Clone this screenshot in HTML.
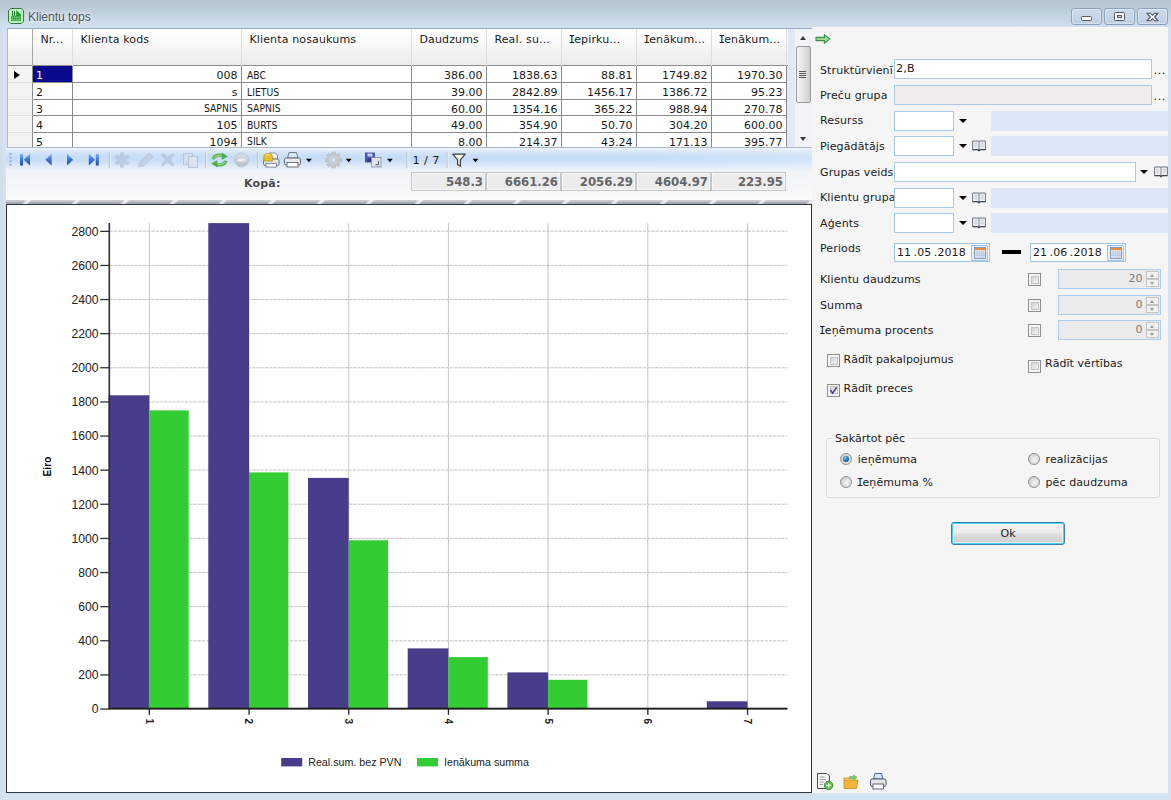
<!DOCTYPE html>
<html lang="lv"><head><meta charset="utf-8"><title>Klientu tops</title>
<style>
*{box-sizing:border-box;margin:0;padding:0}
html,body{width:1171px;height:800px;overflow:hidden}
body{position:relative;font-family:"DejaVu Sans","Liberation Sans",sans-serif;font-size:11px;color:#1a1a1a;
 background:linear-gradient(180deg,#b4c4d1 0px,#becfdc 12px,#d0e0f0 27px,#d2e2f1 200px,#d4e3f1 800px)}
.abs{position:absolute}
.t{position:absolute;white-space:nowrap;line-height:14px;height:14px}
.lbl{position:absolute;white-space:nowrap;line-height:14px;height:14px;left:820px;letter-spacing:0.12px;margin-top:1px}
.inp{position:absolute;background:#fff;border:1px solid #abc8e6;height:20px}
.blue{position:absolute;background:#dce7f8;height:19.5px;margin-top:.4px;left:990.5px;width:177.5px}
.cb{position:absolute;width:13px;height:13px;border:1px solid #8e8f8f;background:#f4f4f4}
.cb i{position:absolute;left:1.5px;top:1.5px;width:8px;height:8px;background:linear-gradient(135deg,#d2d2d2,#f5f5f5);border:1px solid #c3c3c3}
.rd{position:absolute;width:12px;height:12px;border-radius:50%;border:1px solid #8e8f8f;background:radial-gradient(circle at 58% 58%,#f4f4f4 0,#d9d9d9 55%,#bdbdbd 100%)}
.arr{position:absolute;width:0;height:0;border-left:4px solid transparent;border-right:4px solid transparent;border-top:4.8px solid #000;margin-left:-.2px}
.cell{position:absolute;height:17px;line-height:17px;white-space:nowrap;border-right:1px solid #8a8a8a;border-bottom:1px solid #8a8a8a;background:#fff;overflow:hidden}
.num{text-align:right;padding-right:3.5px}
.hd{position:absolute;top:1px;height:37px;white-space:nowrap;padding:4px 0 0 7.4px;line-height:14px;letter-spacing:0.15px;overflow:hidden;border-right:1px solid #dedede}
.sum{position:absolute;top:172px;height:19px;border:1px solid #c6c6c6;background:#ececec;text-align:right;padding-right:2px;line-height:18.6px;font-weight:bold;color:#66666a;font-size:11.7px;box-shadow:inset 0 0 0 1px #f7f7f7}
.vi{font-family:'DejaVu Sans Mono','Liberation Mono',monospace;margin:0 -1.1px 0 -0.9px}
</style></head>
<body>
<!-- title bar -->
<svg class="abs" style="left:7px;top:7px" width="18" height="18" viewBox="0 0 18 18">
<path d="M3.7 1.5 H14.3 L16.5 3.7 V14.3 L14.3 16.5 H3.7 L1.5 14.3 V3.7 Z" fill="#c6f4c4" stroke="#2e7d3c" stroke-width="1" stroke-linejoin="round"/>
<path d="M5 4 H6 V8.8 H5 Z M7 4 H8 V8.8 H7 Z" fill="#1c6e2c"/>
<path d="M9.2 2.9 L13.9 7.6 V9 H9.2 Z" fill="#14a324"/>
<rect x="4" y="8.7" width="9.9" height="5.1" fill="#23a032"/>
<path d="M4.8 10.1 H13.2 M4.8 12.2 H13.2" stroke="#b9f0b4" stroke-width="0.9" stroke-dasharray="1.3 0.9"/>
</svg>
<div class="t" style="left:28px;top:10px;font-family:'Liberation Sans',sans-serif;font-size:12px;color:#46525d;text-shadow:0 0 4px #fff,0 0 6px #fff">Klientu tops</div>
<div class="abs" style="left:0;top:28px;width:3px;height:772px;background:#cfe0ea"></div><div class="abs" style="left:3px;top:28px;width:3.5px;height:766px;background:#dadff4"></div>
<div class="abs" style="left:1168px;top:27px;width:3px;height:773px;background:#d3e2ee"></div>
<div class="abs" style="left:1071px;top:8px;width:31px;height:17px;border:1px solid #8da1ba;border-radius:3px;background:linear-gradient(180deg,#ccdaea 0,#c6d6e8 50%,#bfd0e4 100%);box-shadow:inset 0 0 0 1px rgba(255,255,255,.35)"><div class="abs" style="left:9px;top:6.7px;width:11px;height:5px;border:1px solid #4f5964;background:#fafbfd;border-radius:1.5px"></div></div>
<div class="abs" style="left:1104px;top:8px;width:30.5px;height:17px;border:1px solid #8da1ba;border-radius:3px;background:linear-gradient(180deg,#ccdaea 0,#c6d6e8 50%,#bfd0e4 100%);box-shadow:inset 0 0 0 1px rgba(255,255,255,.35)"><div class="abs" style="left:9px;top:2.7px;width:11px;height:9px;border:1px solid #4f5964;background:#fafbfd;border-radius:1.5px"><div class="abs" style="left:2px;top:2px;width:5px;height:3px;border:1px solid #4f5964;background:#c4d2e2"></div></div></div>
<div class="abs" style="left:1136.5px;top:8px;width:31px;height:17px;border:1px solid #8da1ba;border-radius:3px;background:linear-gradient(180deg,#ccdaea 0,#c6d6e8 50%,#bfd0e4 100%);box-shadow:inset 0 0 0 1px rgba(255,255,255,.35)"><svg class="abs" style="left:8px;top:3px" width="13" height="10" viewBox="0 0 13 10"><path d="M0.8 1.2 L4.4 1.2 L6.5 3.3 L8.6 1.2 L12.2 1.2 L8.6 5 L12.2 8.8 L8.6 8.8 L6.5 6.7 L4.4 8.8 L0.8 8.8 L4.4 5 Z" fill="#fafbfd" stroke="#4f5964" stroke-width="1.1" stroke-linejoin="round"/></svg></div>
<!-- data grid -->
<div class="abs" style="left:6px;top:28px;width:806px;height:120px;background:#dfeaf6;overflow:hidden">
<div class="abs" style="left:1px;top:0;width:805px;height:1px;background:#9dabc0"></div><div class="abs" style="left:0;top:0;width:1px;height:120px;background:#d6dff4"></div><div class="abs" style="left:1px;top:0;width:1px;height:120px;background:#a9b9cf"></div>
<div class="abs" style="left:2px;top:1px;width:780px;height:37px;background:linear-gradient(180deg,#fefefe 0,#fafafa 40%,#f2f2f2 62%,#ededed 100%);border-bottom:1px solid #8c8c8c"></div>
<div class="hd" style="left:1px;width:26px;border-right-color:#a8a8a8"></div>
<div class="hd" style="left:27px;width:40px">Nr...</div>
<div class="hd" style="left:67px;width:169px">Klienta kods</div>
<div class="hd" style="left:236px;width:170px">Klienta nosaukums</div>
<div class="hd" style="left:406px;width:75px">Daudzums</div>
<div class="hd" style="left:481px;width:75px">Real. su...</div>
<div class="hd" style="left:556px;width:75px"><span class="vi">I</span>epirku...</div>
<div class="hd" style="left:631px;width:75px"><span class="vi">I</span>enākum...</div>
<div class="hd" style="left:706px;width:75px"><span class="vi">I</span>enākum...</div>
<div class="cell" style="left:2px;top:38px;height:17px;line-height:20.4px;width:25px;background:#f3f3f3;border-bottom:1px solid #e0e0e0"></div>
<div class="cell" style="left:27px;top:38px;height:17px;line-height:20.4px;width:40px;padding-left:3px;background:#0a0a8c;color:#fff;">1</div>
<div class="cell num" style="left:67px;top:38px;height:17px;line-height:20.4px;width:169px;">008</div>
<div class="cell" style="left:236px;top:38px;height:17px;line-height:18.6px;width:170px;padding-left:5px;font-family:'DejaVu Sans Condensed','Liberation Sans',sans-serif;font-size:10.3px">ABC</div>
<div class="cell num" style="left:406px;top:38px;height:17px;line-height:20.4px;width:75px">386.00</div>
<div class="cell num" style="left:481px;top:38px;height:17px;line-height:20.4px;width:75px">1838.63</div>
<div class="cell num" style="left:556px;top:38px;height:17px;line-height:20.4px;width:75px">88.81</div>
<div class="cell num" style="left:631px;top:38px;height:17px;line-height:20.4px;width:75px">1749.82</div>
<div class="cell num" style="left:706px;top:38px;height:17px;line-height:20.4px;width:75px">1970.30</div>
<div class="cell" style="left:2px;top:55px;height:17px;line-height:20.4px;width:25px;background:#f3f3f3;border-bottom:1px solid #e0e0e0"></div>
<div class="cell" style="left:27px;top:55px;height:17px;line-height:20.4px;width:40px;padding-left:3px;">2</div>
<div class="cell num" style="left:67px;top:55px;height:17px;line-height:20.4px;width:169px;">s</div>
<div class="cell" style="left:236px;top:55px;height:17px;line-height:18.6px;width:170px;padding-left:5px;font-family:'DejaVu Sans Condensed','Liberation Sans',sans-serif;font-size:10.3px">LIETUS</div>
<div class="cell num" style="left:406px;top:55px;height:17px;line-height:20.4px;width:75px">39.00</div>
<div class="cell num" style="left:481px;top:55px;height:17px;line-height:20.4px;width:75px">2842.89</div>
<div class="cell num" style="left:556px;top:55px;height:17px;line-height:20.4px;width:75px">1456.17</div>
<div class="cell num" style="left:631px;top:55px;height:17px;line-height:20.4px;width:75px">1386.72</div>
<div class="cell num" style="left:706px;top:55px;height:17px;line-height:20.4px;width:75px">95.23</div>
<div class="cell" style="left:2px;top:72px;height:16px;line-height:19.4px;width:25px;background:#f3f3f3;border-bottom:1px solid #e0e0e0"></div>
<div class="cell" style="left:27px;top:72px;height:16px;line-height:19.4px;width:40px;padding-left:3px;">3</div>
<div class="cell num" style="left:67px;top:72px;height:16px;line-height:17.6px;width:169px;font-family:'DejaVu Sans Condensed','Liberation Sans',sans-serif;font-size:10.3px;">SAPNIS</div>
<div class="cell" style="left:236px;top:72px;height:16px;line-height:17.6px;width:170px;padding-left:5px;font-family:'DejaVu Sans Condensed','Liberation Sans',sans-serif;font-size:10.3px">SAPNIS</div>
<div class="cell num" style="left:406px;top:72px;height:16px;line-height:19.4px;width:75px">60.00</div>
<div class="cell num" style="left:481px;top:72px;height:16px;line-height:19.4px;width:75px">1354.16</div>
<div class="cell num" style="left:556px;top:72px;height:16px;line-height:19.4px;width:75px">365.22</div>
<div class="cell num" style="left:631px;top:72px;height:16px;line-height:19.4px;width:75px">988.94</div>
<div class="cell num" style="left:706px;top:72px;height:16px;line-height:19.4px;width:75px">270.78</div>
<div class="cell" style="left:2px;top:88px;height:17px;line-height:20.4px;width:25px;background:#f3f3f3;border-bottom:1px solid #e0e0e0"></div>
<div class="cell" style="left:27px;top:88px;height:17px;line-height:20.4px;width:40px;padding-left:3px;">4</div>
<div class="cell num" style="left:67px;top:88px;height:17px;line-height:20.4px;width:169px;">105</div>
<div class="cell" style="left:236px;top:88px;height:17px;line-height:18.6px;width:170px;padding-left:5px;font-family:'DejaVu Sans Condensed','Liberation Sans',sans-serif;font-size:10.3px">BURTS</div>
<div class="cell num" style="left:406px;top:88px;height:17px;line-height:20.4px;width:75px">49.00</div>
<div class="cell num" style="left:481px;top:88px;height:17px;line-height:20.4px;width:75px">354.90</div>
<div class="cell num" style="left:556px;top:88px;height:17px;line-height:20.4px;width:75px">50.70</div>
<div class="cell num" style="left:631px;top:88px;height:17px;line-height:20.4px;width:75px">304.20</div>
<div class="cell num" style="left:706px;top:88px;height:17px;line-height:20.4px;width:75px">600.00</div>
<div class="cell" style="left:2px;top:105px;height:17px;line-height:20.4px;width:25px;background:#f3f3f3;border-bottom:1px solid #e0e0e0"></div>
<div class="cell" style="left:27px;top:105px;height:17px;line-height:20.4px;width:40px;padding-left:3px;">5</div>
<div class="cell num" style="left:67px;top:105px;height:17px;line-height:20.4px;width:169px;">1094</div>
<div class="cell" style="left:236px;top:105px;height:17px;line-height:16.6px;width:170px;padding-left:5px;font-family:'DejaVu Sans Condensed','Liberation Sans',sans-serif;font-size:10.3px">SILK</div>
<div class="cell num" style="left:406px;top:105px;height:17px;line-height:20.4px;width:75px">8.00</div>
<div class="cell num" style="left:481px;top:105px;height:17px;line-height:20.4px;width:75px">214.37</div>
<div class="cell num" style="left:556px;top:105px;height:17px;line-height:20.4px;width:75px">43.24</div>
<div class="cell num" style="left:631px;top:105px;height:17px;line-height:20.4px;width:75px">171.13</div>
<div class="cell num" style="left:706px;top:105px;height:17px;line-height:20.4px;width:75px">395.77</div>
<div class="abs" style="left:8px;top:42.5px;width:0;height:0;border-top:4.5px solid transparent;border-bottom:4.5px solid transparent;border-left:6px solid #000"></div>
<div class="abs" style="left:789px;top:1px;width:17px;height:119px;background:#f1f3f6"></div>
<div class="abs" style="left:789.5px;top:18px;width:15.5px;height:57px;border:1px solid #9a9a9a;border-radius:2px;background:linear-gradient(90deg,#f4f4f4 0,#e3e3e5 50%,#cfcfd3 100%)"></div>
<div class="abs" style="left:793px;top:43px;width:7px;height:1px;background:#5a5a5a;box-shadow:0 2px 0 #5a5a5a,0 4px 0 #5a5a5a,0 6px 0 #5a5a5a"></div>
<div class="abs" style="left:794px;top:7.5px;width:0;height:0;border-left:3.4px solid transparent;border-right:3.4px solid transparent;border-bottom:4px solid #3a3a3a"></div>
<div class="abs" style="left:794px;top:109px;width:0;height:0;border-left:3.4px solid transparent;border-right:3.4px solid transparent;border-top:4px solid #3a3a3a"></div>
</div>
<!-- toolbar / totals -->
<div class="abs" style="left:6px;top:148px;width:806px;height:24px;background:linear-gradient(180deg,#f0f5fc 0,#dae8f9 14%,#c7ddf8 34%,#c9dff8 54%,#dde9f9 74%,#ecf2fa 90%,#f2f5f9 100%)"></div>
<div class="abs" style="left:406px;top:148px;width:406px;height:24px;background:linear-gradient(90deg,rgba(238,243,250,0) 0,rgba(238,243,250,.0) 60%,rgba(240,244,250,.25) 100%)"></div>
<div class="abs" style="left:7px;top:147px;width:805px;height:1px;background:#a9b7ca"></div>
<div class="abs" style="left:6px;top:172px;width:806px;height:28px;background:linear-gradient(180deg,#f0f3f8 0,#f5f6f8 50%,#fbfbfa 100%)"></div>
<div class="abs" style="left:6px;top:200px;width:806px;height:4.5px;background:repeating-linear-gradient(135deg,rgba(255,255,255,0) 0,rgba(255,255,255,0) 13.6px,rgba(255,255,255,.7) 15.4px,rgba(255,255,255,.7) 17px,rgba(255,255,255,0) 18.8px,rgba(255,255,255,0) 34.65px),linear-gradient(180deg,#d3d6d9 0,#b4b9be 40%,#8e959b 100%)"></div>
<svg class="abs" style="left:6px;top:148px" width="806" height="24" viewBox="0 0 806 24">
<defs><linearGradient id="bl" x1="0" y1="0" x2="0" y2="1"><stop offset="0" stop-color="#7db0f2"/><stop offset="0.5" stop-color="#3a72dc"/><stop offset="1" stop-color="#2449a8"/></linearGradient><linearGradient id="gy" x1="0" y1="0" x2="0" y2="1"><stop offset="0" stop-color="#dfe2e8"/><stop offset="1" stop-color="#aeb3bc"/></linearGradient></defs>
<rect x="3.5" y="5.0" width="2" height="2" fill="#9fb0c6"/>
<rect x="3.5" y="8.6" width="2" height="2" fill="#9fb0c6"/>
<rect x="3.5" y="12.2" width="2" height="2" fill="#9fb0c6"/>
<rect x="3.5" y="15.8" width="2" height="2" fill="#9fb0c6"/>
<rect x="14" y="6" width="3" height="11.5" fill="url(#bl)"/><path d="M24 5.8 L24 17.6 L17.8 11.7 Z" fill="url(#bl)"/>
<path d="M45.6 5.8 L45.6 17.6 L39.4 11.7 Z" fill="url(#bl)"/>
<path d="M61 5.8 L61 17.6 L67.2 11.7 Z" fill="url(#bl)"/>
<path d="M82.8 5.8 L82.8 17.6 L89 11.7 Z" fill="url(#bl)"/><rect x="89.8" y="6" width="3" height="11.5" fill="url(#bl)"/>
<rect x="102.8" y="4" width="1.2" height="16" fill="#bcc3ce" opacity=".85"/><rect x="104.0" y="4" width="1" height="16" fill="#f4f7fb" opacity=".7"/>
<rect x="199" y="4" width="1.2" height="16" fill="#bcc3ce" opacity=".85"/><rect x="200.2" y="4" width="1" height="16" fill="#f4f7fb" opacity=".7"/>
<rect x="251" y="4" width="1.2" height="16" fill="#bcc3ce" opacity=".85"/><rect x="252.2" y="4" width="1" height="16" fill="#f4f7fb" opacity=".7"/>
<rect x="400.3" y="4" width="1.2" height="16" fill="#bcc3ce" opacity=".85"/><rect x="401.5" y="4" width="1" height="16" fill="#f4f7fb" opacity=".7"/>
<rect x="440.5" y="4" width="1.2" height="16" fill="#bcc3ce" opacity=".85"/><rect x="441.7" y="4" width="1" height="16" fill="#f4f7fb" opacity=".7"/>
<g stroke="#b4c4db" stroke-width="4.2" stroke-linecap="round" opacity=".75"><path d="M116 6 V18 M110.8 9 L121.2 15 M121.2 9 L110.8 15"/></g>
<path d="M132.5 18.8 L133.8 14.2 L143 5.2 L147 9 L137.6 18 Z" fill="#c1cfe2" stroke="#b4c3d9" stroke-width="1" opacity=".85"/>
<g stroke="#b7c5da" stroke-width="3.4" stroke-linecap="round" opacity=".8"><path d="M157 7 L166.5 16.5 M166.5 7 L157 16.5"/></g>
<rect x="177.5" y="5.5" width="9" height="11" fill="#d3dfee" stroke="#b7c5da"/><rect x="182.5" y="8.5" width="9" height="11" fill="#dbe5f2" stroke="#b7c5da"/>
<g fill="none" stroke="#4fae48" stroke-width="3.2"><path d="M207.3 11.2 C208 7 214 5.8 217.6 8.6"/><path d="M219.7 12.8 C219 17 213 18.2 209.4 15.4"/></g><g fill="none" stroke="#9fdc93" stroke-width="1.1"><path d="M207.6 10.6 C208.6 7.4 213.8 6.4 216.8 8.4"/><path d="M219.4 13.4 C218.4 16.6 213.2 17.6 210.2 15.6"/></g><path d="M215.6 4.6 L222 8.6 L215.8 11.8 Z" fill="#4fae48"/><path d="M211.4 19.4 L205 15.4 L211.2 12.2 Z" fill="#4fae48"/>
<circle cx="235.5" cy="12" r="7" fill="url(#gy)" stroke="#bcc2cc" stroke-width="1" opacity=".8"/><rect x="231.5" y="10.8" width="8" height="2.6" rx="1" fill="#eef0f3"/>
<path d="M263.5 5 L269.5 5 L271.5 7.5 L271.5 11 L263.5 11 Z" fill="#f6f8fb" stroke="#7a88a0" stroke-width=".9"/><rect x="257.5" y="11" width="15.5" height="6.5" rx="1.8" fill="#e3e6ea" stroke="#68727f" stroke-width="1"/><rect x="260" y="15.3" width="10.5" height="3.8" fill="#fafafa" stroke="#68727f" stroke-width=".8"/><path d="M257.8 9 Q257.8 5.8 261 5.8 L265.2 5.8 L266.6 8.4 L266.6 13 L257.8 13 Z" fill="#e6c02c" stroke="#b8941e" stroke-width=".8"/><path d="M259 8 Q259.4 6.8 261 6.8 L264.4 6.8" fill="none" stroke="#f7e48a" stroke-width=".9"/>
<path d="M281.5 10 L283 4.5 L290.5 4.5 L292 10 Z" fill="#d9e8f8" stroke="#6a7a92" stroke-width="1"/><rect x="278.5" y="10" width="16" height="7" rx="1.8" fill="#e6e8ec" stroke="#5f6977" stroke-width="1"/><rect x="281" y="14.5" width="11" height="4.5" fill="#fbfbfb" stroke="#5f6977" stroke-width=".9"/>
<path d="M300 10.7 H305.8 L302.9 14.2 Z" fill="#000"/>
<g transform="translate(327.5,12)"><g fill="#c3c7ce" stroke="#b0b5bd" stroke-width=".5"><rect x="-1.8" y="-8" width="3.6" height="4" transform="rotate(0)"/><rect x="-1.8" y="-8" width="3.6" height="4" transform="rotate(45)"/><rect x="-1.8" y="-8" width="3.6" height="4" transform="rotate(90)"/><rect x="-1.8" y="-8" width="3.6" height="4" transform="rotate(135)"/><rect x="-1.8" y="-8" width="3.6" height="4" transform="rotate(180)"/><rect x="-1.8" y="-8" width="3.6" height="4" transform="rotate(225)"/><rect x="-1.8" y="-8" width="3.6" height="4" transform="rotate(270)"/><rect x="-1.8" y="-8" width="3.6" height="4" transform="rotate(315)"/></g><circle r="5.6" fill="#cbced4" stroke="#b0b5bd" stroke-width=".6"/><circle r="2.4" fill="#d9e6f6" stroke="#b0b5bd" stroke-width=".6"/></g>
<path d="M339.8 10.7 H345.6 L342.7 14.2 Z" fill="#000"/>
<rect x="359.5" y="5" width="9" height="9" fill="#4a55b8" stroke="#39439a" stroke-width=".8"/><rect x="361.5" y="5.5" width="5" height="3" fill="#c9cff0"/><rect x="361.5" y="10.5" width="5" height="3.5" fill="#2f378a"/><rect x="365.5" y="9.5" width="9.5" height="9.5" fill="#dfe3ea" stroke="#808aa0" stroke-width=".8"/><path d="M372.5 13 V16.8 H369.5" fill="none" stroke="#444e66" stroke-width="1"/>
<path d="M381 10.7 H386.8 L383.9 14.2 Z" fill="#000"/>
<path d="M446.8 6.2 H459.2 L454.4 11.8 V18.2 L451.6 16.6 V11.8 Z" fill="#fdfdfd" stroke="#3c3c3c" stroke-width="1.2" stroke-linejoin="round"/>
<path d="M466.6 10.7 H472.4 L469.5 14.2 Z" fill="#000"/>
</svg>
<div class="t" style="left:412.5px;top:154px;font-size:11.3px;letter-spacing:.4px">1 / 7</div>
<div class="t" style="left:244px;top:177px;font-weight:bold;color:#4a4a4a;letter-spacing:.2px">Kopā:</div>
<div class="sum" style="left:411px;width:75px">548.3</div>
<div class="sum" style="left:486px;width:75px">6661.26</div>
<div class="sum" style="left:561px;width:75px">2056.29</div>
<div class="sum" style="left:636px;width:75px">4604.97</div>
<div class="sum" style="left:711px;width:75px">223.95</div>
<!-- chart -->
<div class="abs" style="left:6px;top:204px;width:806px;height:589px;background:#fff;border:1px solid #2c3540"></div>
<svg class="abs" style="left:0;top:0" width="1171" height="800" viewBox="0 0 1171 800" font-family="'Liberation Sans',Arial,sans-serif">
<rect x="148.8" y="223.0" width="1" height="486.0" fill="#c6c6c6"/>
<rect x="248.5" y="223.0" width="1" height="486.0" fill="#c6c6c6"/>
<rect x="348.2" y="223.0" width="1" height="486.0" fill="#c6c6c6"/>
<rect x="447.9" y="223.0" width="1" height="486.0" fill="#c6c6c6"/>
<rect x="547.6" y="223.0" width="1" height="486.0" fill="#c6c6c6"/>
<rect x="647.3" y="223.0" width="1" height="486.0" fill="#c6c6c6"/>
<rect x="747.0" y="223.0" width="1" height="486.0" fill="#c6c6c6"/>
<line x1="109.5" y1="674.9" x2="787.5" y2="674.9" stroke="#c2c2c2" stroke-width="1" stroke-dasharray="3.2 1"/>
<line x1="109.5" y1="640.8" x2="787.5" y2="640.8" stroke="#c2c2c2" stroke-width="1" stroke-dasharray="3.2 1"/>
<line x1="109.5" y1="606.6" x2="787.5" y2="606.6" stroke="#c2c2c2" stroke-width="1" stroke-dasharray="3.2 1"/>
<line x1="109.5" y1="572.5" x2="787.5" y2="572.5" stroke="#c2c2c2" stroke-width="1" stroke-dasharray="3.2 1"/>
<line x1="109.5" y1="538.4" x2="787.5" y2="538.4" stroke="#c2c2c2" stroke-width="1" stroke-dasharray="3.2 1"/>
<line x1="109.5" y1="504.2" x2="787.5" y2="504.2" stroke="#c2c2c2" stroke-width="1" stroke-dasharray="3.2 1"/>
<line x1="109.5" y1="470.1" x2="787.5" y2="470.1" stroke="#c2c2c2" stroke-width="1" stroke-dasharray="3.2 1"/>
<line x1="109.5" y1="436.0" x2="787.5" y2="436.0" stroke="#c2c2c2" stroke-width="1" stroke-dasharray="3.2 1"/>
<line x1="109.5" y1="401.9" x2="787.5" y2="401.9" stroke="#c2c2c2" stroke-width="1" stroke-dasharray="3.2 1"/>
<line x1="109.5" y1="367.8" x2="787.5" y2="367.8" stroke="#c2c2c2" stroke-width="1" stroke-dasharray="3.2 1"/>
<line x1="109.5" y1="333.6" x2="787.5" y2="333.6" stroke="#c2c2c2" stroke-width="1" stroke-dasharray="3.2 1"/>
<line x1="109.5" y1="299.5" x2="787.5" y2="299.5" stroke="#c2c2c2" stroke-width="1" stroke-dasharray="3.2 1"/>
<line x1="109.5" y1="265.4" x2="787.5" y2="265.4" stroke="#c2c2c2" stroke-width="1" stroke-dasharray="3.2 1"/>
<line x1="109.5" y1="231.2" x2="787.5" y2="231.2" stroke="#c2c2c2" stroke-width="1" stroke-dasharray="3.2 1"/>
<rect x="108.6" y="395.3" width="40.7" height="313.7" fill="#483d8b"/>
<rect x="149.3" y="410.4" width="39.4" height="298.6" fill="#32cd32"/>
<rect x="208.3" y="223.1" width="40.7" height="485.9" fill="#483d8b"/>
<rect x="249.0" y="472.4" width="39.4" height="236.6" fill="#32cd32"/>
<rect x="308.0" y="477.9" width="40.7" height="231.1" fill="#483d8b"/>
<rect x="348.7" y="540.3" width="39.4" height="168.7" fill="#32cd32"/>
<rect x="407.7" y="648.4" width="40.7" height="60.6" fill="#483d8b"/>
<rect x="448.4" y="657.1" width="39.4" height="51.9" fill="#32cd32"/>
<rect x="507.4" y="672.4" width="40.7" height="36.6" fill="#483d8b"/>
<rect x="548.1" y="679.8" width="39.4" height="29.2" fill="#32cd32"/>
<rect x="607.1" y="708.1" width="40.7" height="0.9" fill="#483d8b"/>
<rect x="647.8" y="708.3" width="39.4" height="0.7" fill="#32cd32"/>
<rect x="706.8" y="701.3" width="40.7" height="7.7" fill="#483d8b"/>
<rect x="747.5" y="708.0" width="39.4" height="1.0" fill="#32cd32"/>
<rect x="108.5" y="223.0" width="1.6" height="486.0" fill="#2e2e2e"/>
<rect x="108.5" y="707.7" width="679.0" height="1.9" fill="#1c1c1c"/>
<rect x="100.2" y="708.4" width="9.3" height="1.3" fill="#333"/>
<text x="98.6" y="713.4" text-anchor="end" font-size="12.2" fill="#222">0</text>
<rect x="100.2" y="674.3" width="9.3" height="1.3" fill="#333"/>
<text x="98.6" y="679.3" text-anchor="end" font-size="12.2" fill="#222">200</text>
<rect x="100.2" y="640.1" width="9.3" height="1.3" fill="#333"/>
<text x="98.6" y="645.1" text-anchor="end" font-size="12.2" fill="#222">400</text>
<rect x="100.2" y="606.0" width="9.3" height="1.3" fill="#333"/>
<text x="98.6" y="611.0" text-anchor="end" font-size="12.2" fill="#222">600</text>
<rect x="100.2" y="571.9" width="9.3" height="1.3" fill="#333"/>
<text x="98.6" y="576.9" text-anchor="end" font-size="12.2" fill="#222">800</text>
<rect x="100.2" y="537.8" width="9.3" height="1.3" fill="#333"/>
<text x="98.6" y="542.8" text-anchor="end" font-size="12.2" fill="#222">1000</text>
<rect x="100.2" y="503.6" width="9.3" height="1.3" fill="#333"/>
<text x="98.6" y="508.6" text-anchor="end" font-size="12.2" fill="#222">1200</text>
<rect x="100.2" y="469.5" width="9.3" height="1.3" fill="#333"/>
<text x="98.6" y="474.5" text-anchor="end" font-size="12.2" fill="#222">1400</text>
<rect x="100.2" y="435.4" width="9.3" height="1.3" fill="#333"/>
<text x="98.6" y="440.4" text-anchor="end" font-size="12.2" fill="#222">1600</text>
<rect x="100.2" y="401.3" width="9.3" height="1.3" fill="#333"/>
<text x="98.6" y="406.3" text-anchor="end" font-size="12.2" fill="#222">1800</text>
<rect x="100.2" y="367.1" width="9.3" height="1.3" fill="#333"/>
<text x="98.6" y="372.1" text-anchor="end" font-size="12.2" fill="#222">2000</text>
<rect x="100.2" y="333.0" width="9.3" height="1.3" fill="#333"/>
<text x="98.6" y="338.0" text-anchor="end" font-size="12.2" fill="#222">2200</text>
<rect x="100.2" y="298.9" width="9.3" height="1.3" fill="#333"/>
<text x="98.6" y="303.9" text-anchor="end" font-size="12.2" fill="#222">2400</text>
<rect x="100.2" y="264.8" width="9.3" height="1.3" fill="#333"/>
<text x="98.6" y="269.8" text-anchor="end" font-size="12.2" fill="#222">2600</text>
<rect x="100.2" y="230.7" width="9.3" height="1.3" fill="#333"/>
<text x="98.6" y="235.7" text-anchor="end" font-size="12.2" fill="#222">2800</text>
<rect x="148.7" y="709.0" width="1.3" height="5.8" fill="#222"/>
<text transform="translate(145.7,718.4) rotate(90)" font-size="10" font-weight="bold" fill="#222">1</text>
<rect x="248.4" y="709.0" width="1.3" height="5.8" fill="#222"/>
<text transform="translate(245.4,718.4) rotate(90)" font-size="10" font-weight="bold" fill="#222">2</text>
<rect x="348.1" y="709.0" width="1.3" height="5.8" fill="#222"/>
<text transform="translate(345.1,718.4) rotate(90)" font-size="10" font-weight="bold" fill="#222">3</text>
<rect x="447.8" y="709.0" width="1.3" height="5.8" fill="#222"/>
<text transform="translate(444.8,718.4) rotate(90)" font-size="10" font-weight="bold" fill="#222">4</text>
<rect x="547.5" y="709.0" width="1.3" height="5.8" fill="#222"/>
<text transform="translate(544.5,718.4) rotate(90)" font-size="10" font-weight="bold" fill="#222">5</text>
<rect x="647.2" y="709.0" width="1.3" height="5.8" fill="#222"/>
<text transform="translate(644.2,718.4) rotate(90)" font-size="10" font-weight="bold" fill="#222">6</text>
<rect x="746.9" y="709.0" width="1.3" height="5.8" fill="#222"/>
<text transform="translate(743.9,718.4) rotate(90)" font-size="10" font-weight="bold" fill="#222">7</text>
<text transform="translate(51,476.5) rotate(-90)" font-size="10" font-weight="bold" fill="#000" letter-spacing="0.15">Eiro</text>
<rect x="281.2" y="758" width="21" height="8.4" fill="#483d8b"/>
<text x="308.2" y="765.6" font-size="10.7" fill="#222">Real.sum. bez PVN</text>
<rect x="417" y="758" width="21" height="8.4" fill="#32cd32"/>
<text x="444" y="765.6" font-size="10.7" fill="#222">Ienākuma summa</text>
</svg>
<!-- filter panel -->
<div class="abs" style="left:812px;top:27px;width:356px;height:766px;background:#f5f5f5"></div>
<div class="abs" style="left:812px;top:27px;width:356px;height:1px;background:#fafbfc"></div>
<svg class="abs" style="left:815px;top:34px" width="16" height="10" viewBox="0 0 16 10"><path d="M1 3.4 H9.4 V0.8 L15 5 L9.4 9.2 V6.6 H1 Z" fill="#9ad894" stroke="#3c8f45" stroke-width="1.1"/></svg>
<div class="lbl" style="top:63px">Struktūrvienī</div>
<div class="lbl" style="top:88px">Preču grupa</div>
<div class="lbl" style="top:113px">Resurss</div>
<div class="lbl" style="top:139px">Piegādātājs</div>
<div class="lbl" style="top:165px">Grupas veids</div>
<div class="lbl" style="top:190px">Klientu grupa</div>
<div class="lbl" style="top:216px">Aģents</div>
<div class="lbl" style="top:241px">Periods</div>
<div class="lbl" style="top:272px">Klientu daudzums</div>
<div class="lbl" style="top:298px">Summa</div>
<div class="lbl" style="top:323px"><span class="vi">I</span>eņēmuma procents</div>
<div class="inp" style="left:894px;top:59px;width:258px"></div><div class="t" style="left:896px;top:61.5px;letter-spacing:.3px">2,B</div>
<div class="t" style="left:1153.6px;top:64px;letter-spacing:.6px;font-size:11px">...</div>
<div class="inp" style="left:894px;top:85px;width:258px;background:#eeedea"></div>
<div class="t" style="left:1153.6px;top:90px;letter-spacing:.6px;font-size:11px">...</div>
<div class="inp" style="left:894px;top:111px;width:60px"></div><div class="arr" style="left:959px;top:119px"></div><div class="blue" style="top:111px"></div>
<div class="inp" style="left:894px;top:136px;width:60px"></div><div class="arr" style="left:959px;top:144px"></div><div class="blue" style="top:136px"></div>
<svg class="abs" style="left:972px;top:140px" width="14" height="12" viewBox="0 0 14 12"><path d="M0.6 1 H6.3 Q7 1 7 1.8 Q7 1 7.7 1 H13.4 V9.6 H8 L7 10.8 L6 9.6 H0.6 Z" fill="#f2f3f5" stroke="#5d6674" stroke-width=".9"/><path d="M7 1.8 V10" stroke="#5d6674" stroke-width=".8"/><path d="M2.2 3.2 H5.4 M2.2 5 H5.4 M2.2 6.8 H5.4 M8.6 3.2 H11.8 M8.6 5 H11.8 M8.6 6.8 H11.8" stroke="#b9bec8" stroke-width=".8"/><path d="M0.6 9.6 H6 L7 10.8 L8 9.6 H13.4" fill="none" stroke="#3f4856" stroke-width="1.3"/></svg>
<div class="inp" style="left:894px;top:188px;width:60px"></div><div class="arr" style="left:959px;top:196px"></div><div class="blue" style="top:188px"></div>
<svg class="abs" style="left:972px;top:192px" width="14" height="12" viewBox="0 0 14 12"><path d="M0.6 1 H6.3 Q7 1 7 1.8 Q7 1 7.7 1 H13.4 V9.6 H8 L7 10.8 L6 9.6 H0.6 Z" fill="#f2f3f5" stroke="#5d6674" stroke-width=".9"/><path d="M7 1.8 V10" stroke="#5d6674" stroke-width=".8"/><path d="M2.2 3.2 H5.4 M2.2 5 H5.4 M2.2 6.8 H5.4 M8.6 3.2 H11.8 M8.6 5 H11.8 M8.6 6.8 H11.8" stroke="#b9bec8" stroke-width=".8"/><path d="M0.6 9.6 H6 L7 10.8 L8 9.6 H13.4" fill="none" stroke="#3f4856" stroke-width="1.3"/></svg>
<div class="inp" style="left:894px;top:213px;width:60px"></div><div class="arr" style="left:959px;top:221px"></div><div class="blue" style="top:213px"></div>
<svg class="abs" style="left:972px;top:217px" width="14" height="12" viewBox="0 0 14 12"><path d="M0.6 1 H6.3 Q7 1 7 1.8 Q7 1 7.7 1 H13.4 V9.6 H8 L7 10.8 L6 9.6 H0.6 Z" fill="#f2f3f5" stroke="#5d6674" stroke-width=".9"/><path d="M7 1.8 V10" stroke="#5d6674" stroke-width=".8"/><path d="M2.2 3.2 H5.4 M2.2 5 H5.4 M2.2 6.8 H5.4 M8.6 3.2 H11.8 M8.6 5 H11.8 M8.6 6.8 H11.8" stroke="#b9bec8" stroke-width=".8"/><path d="M0.6 9.6 H6 L7 10.8 L8 9.6 H13.4" fill="none" stroke="#3f4856" stroke-width="1.3"/></svg>
<div class="inp" style="left:894px;top:162px;width:242px"></div><div class="arr" style="left:1140.5px;top:170px"></div><svg class="abs" style="left:1153.5px;top:166px" width="14" height="12" viewBox="0 0 14 12"><path d="M0.6 1 H6.3 Q7 1 7 1.8 Q7 1 7.7 1 H13.4 V9.6 H8 L7 10.8 L6 9.6 H0.6 Z" fill="#f2f3f5" stroke="#5d6674" stroke-width=".9"/><path d="M7 1.8 V10" stroke="#5d6674" stroke-width=".8"/><path d="M2.2 3.2 H5.4 M2.2 5 H5.4 M2.2 6.8 H5.4 M8.6 3.2 H11.8 M8.6 5 H11.8 M8.6 6.8 H11.8" stroke="#b9bec8" stroke-width=".8"/><path d="M0.6 9.6 H6 L7 10.8 L8 9.6 H13.4" fill="none" stroke="#3f4856" stroke-width="1.3"/></svg>
<div class="inp" style="left:894px;top:243px;width:96px;height:19px;border-color:#9fc4e8"></div><div class="t" style="left:897px;top:246px;letter-spacing:.1px;word-spacing:-1.2px">11 .05 .2018</div><div class="abs" style="left:971px;top:244.5px;width:17px;height:16px;border:1px solid #9fc4e8;background:#e6f0fb;border-radius:1px"><svg class="abs" style="left:2px;top:1px" width="12" height="12" viewBox="0 0 12 12"><rect x=".5" y=".5" width="11" height="11" fill="#dde6f3" stroke="#8397b6" stroke-width=".9"/><rect x="1" y="1" width="10" height="2.2" fill="#f08c3c"/><path d="M3 4 V11 M5.2 4 V11 M7.4 4 V11 M9.4 4 V11 M1 6 H11 M1 8.4 H11" stroke="#b4c3da" stroke-width=".7"/></svg></div>
<div class="inp" style="left:1030px;top:243px;width:96px;height:19px;border-color:#9fc4e8"></div><div class="t" style="left:1033px;top:246px;letter-spacing:.1px;word-spacing:-1.2px">21 .06 .2018</div><div class="abs" style="left:1107px;top:244.5px;width:17px;height:16px;border:1px solid #9fc4e8;background:#e6f0fb;border-radius:1px"><svg class="abs" style="left:2px;top:1px" width="12" height="12" viewBox="0 0 12 12"><rect x=".5" y=".5" width="11" height="11" fill="#dde6f3" stroke="#8397b6" stroke-width=".9"/><rect x="1" y="1" width="10" height="2.2" fill="#f08c3c"/><path d="M3 4 V11 M5.2 4 V11 M7.4 4 V11 M9.4 4 V11 M1 6 H11 M1 8.4 H11" stroke="#b4c3da" stroke-width=".7"/></svg></div>
<div class="abs" style="left:1002px;top:250px;width:19px;height:4px;background:#000"></div>
<div class="inp" style="left:1057.5px;top:269.2px;width:103px;height:19.5px;background:#ebebeb;border-color:#a8cdf0"></div><div class="t" style="left:1057.5px;top:272.2px;width:85px;text-align:right;color:#7a7a7a">20</div><div class="abs" style="left:1145.5px;top:271.2px;width:13px;height:8px;border:1px solid #c4c4c4;background:#f1f1f1"><i class="abs" style="left:3px;top:2px;width:0;height:0;border-left:2.5px solid transparent;border-right:2.5px solid transparent;border-bottom:3px solid #9a9a9a"></i></div><div class="abs" style="left:1145.5px;top:279.2px;width:13px;height:8px;border:1px solid #c4c4c4;background:#f1f1f1"><i class="abs" style="left:3px;top:2px;width:0;height:0;border-left:2.5px solid transparent;border-right:2.5px solid transparent;border-top:3px solid #9a9a9a"></i></div>
<div class="cb" style="left:1028px;top:273px"><i></i></div>
<div class="inp" style="left:1057.5px;top:295.2px;width:103px;height:19.5px;background:#ebebeb;border-color:#a8cdf0"></div><div class="t" style="left:1057.5px;top:298.2px;width:85px;text-align:right;color:#7a7a7a">0</div><div class="abs" style="left:1145.5px;top:297.2px;width:13px;height:8px;border:1px solid #c4c4c4;background:#f1f1f1"><i class="abs" style="left:3px;top:2px;width:0;height:0;border-left:2.5px solid transparent;border-right:2.5px solid transparent;border-bottom:3px solid #9a9a9a"></i></div><div class="abs" style="left:1145.5px;top:305.2px;width:13px;height:8px;border:1px solid #c4c4c4;background:#f1f1f1"><i class="abs" style="left:3px;top:2px;width:0;height:0;border-left:2.5px solid transparent;border-right:2.5px solid transparent;border-top:3px solid #9a9a9a"></i></div>
<div class="cb" style="left:1028px;top:299px"><i></i></div>
<div class="inp" style="left:1057.5px;top:320.4px;width:103px;height:19.5px;background:#ebebeb;border-color:#a8cdf0"></div><div class="t" style="left:1057.5px;top:323.4px;width:85px;text-align:right;color:#7a7a7a">0</div><div class="abs" style="left:1145.5px;top:322.4px;width:13px;height:8px;border:1px solid #c4c4c4;background:#f1f1f1"><i class="abs" style="left:3px;top:2px;width:0;height:0;border-left:2.5px solid transparent;border-right:2.5px solid transparent;border-bottom:3px solid #9a9a9a"></i></div><div class="abs" style="left:1145.5px;top:330.4px;width:13px;height:8px;border:1px solid #c4c4c4;background:#f1f1f1"><i class="abs" style="left:3px;top:2px;width:0;height:0;border-left:2.5px solid transparent;border-right:2.5px solid transparent;border-top:3px solid #9a9a9a"></i></div>
<div class="cb" style="left:1028px;top:324px"><i></i></div>
<div class="cb" style="left:827px;top:354px"><i></i></div>
<div class="t" style="left:843.5px;top:353px;letter-spacing:.05px">Rādīt pakalpojumus</div>
<div class="cb" style="left:1028px;top:359.5px"><i></i></div>
<div class="t" style="left:1045px;top:357px;letter-spacing:.05px">Rādīt vērtības</div>
<div class="cb" style="left:827px;top:383.5px"><i></i><svg class="abs" style="left:1px;top:1px" width="9" height="9" viewBox="0 0 9 9"><path d="M1.5 4.2 L3.6 7.2 L7.6 1.4" fill="none" stroke="#35427c" stroke-width="1.45"/></svg></div>
<div class="t" style="left:843.5px;top:382px;letter-spacing:.05px">Rādīt preces</div>
<div class="abs" style="left:826px;top:438px;width:334px;height:60px;border:1px solid #dcdcdc;border-radius:3px;box-shadow:inset 0 0 0 1px #fbfbfb"></div>
<div class="t" style="left:832px;top:432px;padding:0 3px;background:#f5f5f5">Sakārtot pēc</div>
<div class="rd" style="left:840px;top:453px"><i class="abs" style="left:2px;top:2px;width:6px;height:6px;border-radius:50%;background:radial-gradient(circle at 40% 35%,#7fd6f5 0,#2173b8 45%,#123f7a 100%)"></i></div>
<div class="t" style="left:857.7px;top:452.5px;letter-spacing:.1px">ieņēmuma</div>
<div class="rd" style="left:840px;top:476px"></div>
<div class="t" style="left:857.7px;top:475.5px;letter-spacing:.1px"><span class="vi">I</span>eņēmuma %</div>
<div class="rd" style="left:1028px;top:453px"></div>
<div class="t" style="left:1045.5px;top:452.5px;letter-spacing:.1px">realizācijas</div>
<div class="rd" style="left:1028px;top:476px"></div>
<div class="t" style="left:1045.5px;top:475.5px;letter-spacing:.1px">pēc daudzuma</div>
<div class="abs" style="left:951px;top:522px;width:114px;height:23px;border:1px solid #3c7fb1;border-radius:3px;background:linear-gradient(180deg,#f2f2f2 0,#ebebeb 48%,#dddddd 52%,#cfcfcf 100%);box-shadow:inset 0 0 0 1px #48d0f0, inset 0 0 0 2px rgba(255,255,255,.6);text-align:center;line-height:22px">Ok</div>
<svg class="abs" style="left:816px;top:772px" width="72" height="19" viewBox="0 0 72 19"><path d="M1.5 1.5 H11 L13.5 4 V16.5 H1.5 Z" fill="#f4f4f4" stroke="#4c4c4c" stroke-width="1"/><path d="M3.5 5 H9 M3.5 7.5 H10 M3.5 10 H8 M3.5 12.5 H7" stroke="#9a9a9a" stroke-width=".9"/><circle cx="12.6" cy="13.4" r="4.2" fill="#5cc24a" stroke="#2f8a28" stroke-width=".9"/><path d="M12.6 11 V15.8 M10.2 13.4 H15" stroke="#e9ffe0" stroke-width="1.3"/><path d="M28 8 H42 L40.5 16.5 H28 Z" fill="#f2b63a" stroke="#c98a1e" stroke-width=".8"/><path d="M28 8 V6 H33 L34.5 8" fill="#f6c85a" stroke="#c98a1e" stroke-width=".8"/><path d="M33.5 4.6 H37.5 V2.8 L41 5.5 L37.5 8.2 V6.4 H33.5 Z" fill="#74cc5e" stroke="#4aa83a" stroke-width=".5"/><path d="M57.5 7 L58.8 1.5 H65.5 L67 7 Z" fill="#d5e6f8" stroke="#566a8c" stroke-width="1"/><rect x="54.5" y="7" width="15.5" height="7.5" rx="1.8" fill="#e4e7ec" stroke="#4f5868" stroke-width="1"/><rect x="57" y="12" width="10.5" height="5" fill="#fbfbfb" stroke="#4f5868" stroke-width=".9"/></svg>
</body></html>
